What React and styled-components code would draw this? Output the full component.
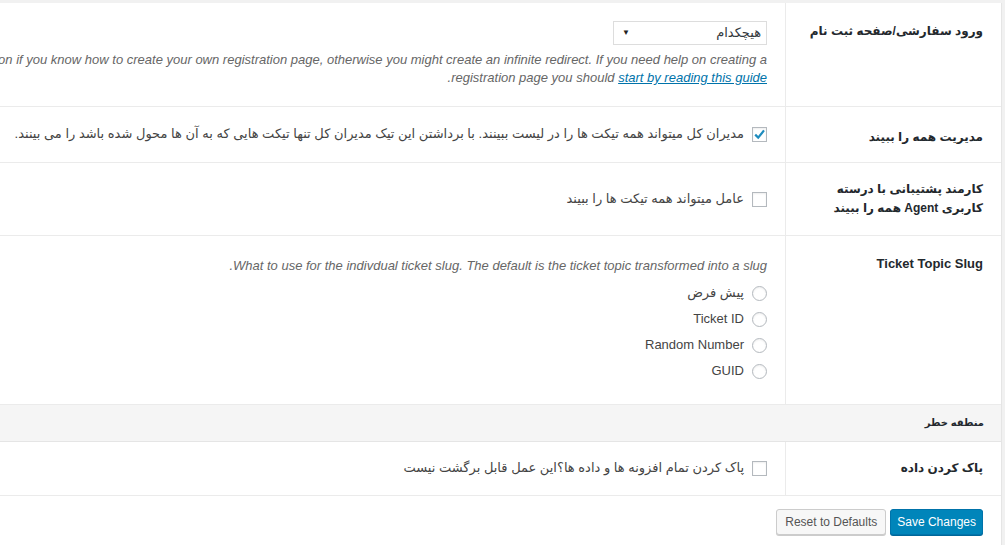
import React from "react"
import styled, { createGlobalStyle } from "styled-components"

const GlobalStyle = createGlobalStyle`
html, body {
  margin: 0;
  padding: 0;
  overflow: hidden;
  background: #f1f1f1;
}
body {
  direction: rtl;
  font-family: "Liberation Sans", "DejaVu Sans", sans-serif;
  font-size: 13px;
  color: #444;
}
`

const Page = styled.div`
  padding: 3px 3px 0 0;
  height: 100vh;
  box-sizing: border-box;
`

const Panel = styled.div`
  background: #fff;
  border-right: 1px solid #e5e5e5;
  height: 100%;
`

const Row = styled.div`
  display: grid;
  grid-template-columns: 216px minmax(0, 1fr);
  border-bottom: 1px solid #ebebeb;
`

const Th = styled.div`
  box-sizing: border-box;
  padding: ${({ $top }) => $top || 19}px 18px 12px 0;
  border-left: 1px solid #ebebeb;
  font-weight: bold;
  font-size: 13px;
  line-height: 19px;
  color: #23282d;
`

// Persian headings render wider in DejaVu than in Tahoma, so they get a smaller size
const Fa = styled.div`
  font-size: 12px;
  line-height: 19px;
`

const Td = styled.div`
  display: flex;
  flex-direction: column;
  justify-content: center;
  align-items: flex-start;
  padding: ${({ $pad }) => $pad || "18px 18px 19px 10px"};
  line-height: 18px;
  color: #444;
`

const SectionRow = styled.div`
  background: #f5f5f5;
  border-bottom: 1px solid #e5e5e5;
  padding: 10px 17px 10px 10px;
  font-size: 10px;
  font-weight: bold;
  line-height: 16px;
  color: #23282d;
`

const Select = styled.div`
  box-sizing: border-box;
  width: 154px;
  height: 24px;
  display: flex;
  align-items: center;
  justify-content: space-between;
  padding: 0 5px 0 8px;
  border: 1px solid #ddd;
  background: #fff;
  color: #32373c;
  font-size: 13px;
`

const Arrow = styled.span`
  font-size: 8px;
  color: #222;
`

const Desc = styled.div`
  margin-top: ${({ $top }) => $top || 0}px;
  font-style: italic;
  color: #666;
`

const Line = styled.div`
  white-space: nowrap;
`

const GuideLink = styled.a`
  color: #0073aa;
  text-decoration: underline;
`

const Option = styled.label`
  display: flex;
  align-items: center;
  gap: 8px;
  height: ${({ $h }) => $h || 18}px;
  white-space: nowrap;
`

const Box = styled.span`
  box-sizing: border-box;
  width: 15px;
  height: 15px;
  flex: none;
  display: inline-flex;
  align-items: center;
  justify-content: center;
  border: 1px solid #b4b9be;
  border-radius: ${({ $round }) => ($round ? "50%" : "0")};
  background: #fff;
  box-shadow: inset 0 1px 2px rgba(0, 0, 0, 0.07);
`

const RadioList = styled.div`
  margin-top: 5px;
  display: flex;
  flex-direction: column;
`

const Footer = styled.div`
  display: flex;
  gap: 4px;
  padding: 13px 18px 0 0;
`

const Button = styled.button`
  height: 26px;
  padding: 0 ${({ $primary }) => ($primary ? 6 : 8)}px;
  font-family: "Liberation Sans", sans-serif;
  font-size: 12px;
  border-radius: 3px;
  border: 1px solid ${({ $primary }) => ($primary ? "#0073aa" : "#ccc")};
  background: ${({ $primary }) => ($primary ? "#0085ba" : "#f7f7f7")};
  color: ${({ $primary }) => ($primary ? "#fff" : "#555")};
  box-shadow: ${({ $primary }) => ($primary ? "0 1px 0 #006799" : "0 1px 0 #ccc")};
  cursor: pointer;
`

const Check = () => (
  <svg width="13" height="13" viewBox="0 0 13 13">
    <path d="M2.2 6.6 L5.2 9.6 L11 2.4" fill="none" stroke="#1e8cbe" strokeWidth="2.2" />
  </svg>
)

const Checkbox = ({ checked, children }) => (
  <Option>
    <Box>{checked && <Check />}</Box>
    <span>{children}</span>
  </Option>
)

const Radio = ({ children }) => (
  <Option $h={26}>
    <Box $round />
    <span>{children}</span>
  </Option>
)

const App = () => {
  return (
    <Page>
      <GlobalStyle />
      <Panel>
        <Row>
          <Th><Fa>ورود سفارشی/صفحه ثبت نام</Fa></Th>
          <Td>
            <Select>
              <span>هیچکدام</span>
              <Arrow>▼</Arrow>
            </Select>
            <Desc $top={6}>
              <Line>Only enable this option if you know how to create your own registration page, otherwise you might create an infinite redirect. If you need help on creating a</Line>
              <Line>registration page you should <GuideLink href="#">start by reading this guide</GuideLink>.</Line>
            </Desc>
          </Td>
        </Row>
        <Row>
          <Th $top={21}><Fa>مدیریت همه را ببیند</Fa></Th>
          <Td>
            <Checkbox checked>مدیران کل میتواند همه تیکت ها را در لیست ببینند. با برداشتن این تیک مدیران کل تنها تیکت هایی که به آن ها محول شده باشد را می بینند.</Checkbox>
          </Td>
        </Row>
        <Row>
          <Th $top={17}><Fa>کارمند پشتیبانی با درسته<br />کاربری Agent همه را ببیند</Fa></Th>
          <Td $pad="27px 18px 27px 10px">
            <Checkbox>عامل میتواند همه تیکت ها را ببیند</Checkbox>
          </Td>
        </Row>
        <Row>
          <Th $top={18}>Ticket Topic Slug</Th>
          <Td $pad="21px 18px 20px 10px">
            <Desc>
              <Line>What to use for the indivdual ticket slug. The default is the ticket topic transformed into a slug.</Line>
            </Desc>
            <RadioList>
              <Radio>پیش فرض</Radio>
              <Radio>Ticket ID</Radio>
              <Radio>Random Number</Radio>
              <Radio>GUID</Radio>
            </RadioList>
          </Td>
        </Row>
        <SectionRow>منطقه خطر</SectionRow>
        <Row>
          <Th $top={17}><Fa>پاک کردن داده</Fa></Th>
          <Td $pad="17px 18px 18px 10px">
            <Checkbox>پاک کردن تمام افزونه ها و داده ها؟این عمل قابل برگشت نیست</Checkbox>
          </Td>
        </Row>
        <Footer>
          <Button $primary>Save Changes</Button>
          <Button>Reset to Defaults</Button>
        </Footer>
      </Panel>
    </Page>
  )
}

export default App
